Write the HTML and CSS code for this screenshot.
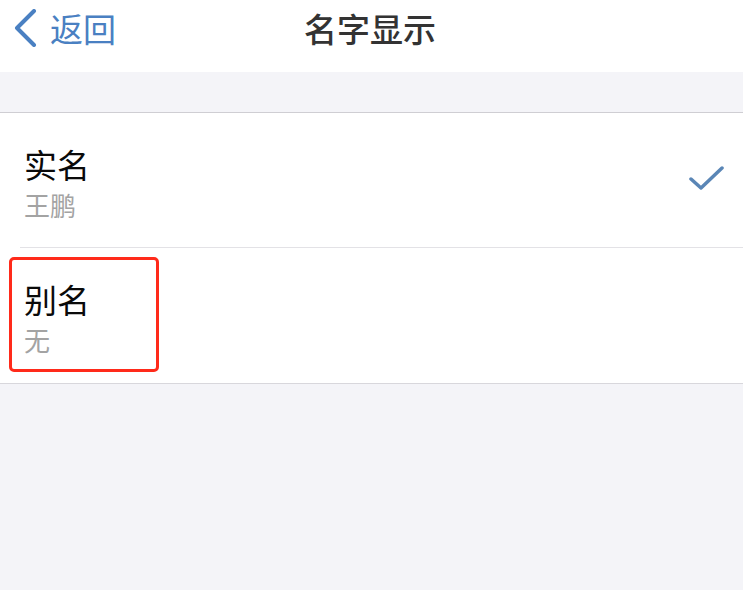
FILE: index.html
```html
<!DOCTYPE html>
<html lang="zh-CN">
<head>
<meta charset="utf-8">
<link rel="stylesheet" href="styles.css">
</head>
<body>
<div class="page">
  <header class="nav">
    <div class="back">
      <svg class="chev" width="26" height="38" viewBox="0 0 26 38"><path d="M22 2 L5 19 L22 36" fill="none" stroke="#4a80c2" stroke-width="4" stroke-linecap="round" stroke-linejoin="round"/></svg>
      <span class="back-text">返回</span>
    </div>
    <div class="title">名字显示</div>
  </header>
  <div class="gap"></div>
  <div class="list">
    <div class="row">
      <div class="texts">
        <div class="main">实名</div>
        <div class="sub">王鹏</div>
      </div>
      <svg class="check" width="38" height="36" viewBox="0 0 38 36"><path d="M2 16 L12 25 L33 5" fill="none" stroke="#5a86b6" stroke-width="3.5" stroke-linecap="round" stroke-linejoin="round"/></svg>
    </div>
    <div class="row last">
      <div class="texts">
        <div class="main">别名</div>
        <div class="sub">无</div>
      </div>
      <div class="highlight"></div>
    </div>
  </div>
  <div class="rest"></div>
</div>
</body>
</html>
```
FILE: styles.css
```css
html, body {
  margin: 0;
  padding: 0;
  background: #f4f4f8;
}
.page {
  width: 743px;
  height: 590px;
  font-family: "Noto Sans CJK SC", "Noto Sans", sans-serif;
  background: #f4f4f8;
  overflow: hidden;
}
.nav {
  height: 72px;
  background: #ffffff;
  position: relative;
  display: flex;
  align-items: center;
  justify-content: center;
}
.back {
  position: absolute;
  left: 12px;
  top: 8px;
  display: flex;
  align-items: center;
  gap: 12px;
}
.back-text {
  font-size: 33px;
  line-height: 40px;
  color: #4a80c2;
}
.title {
  font-size: 33px;
  line-height: 40px;
  color: #333333;
  font-weight: 500;
  margin-top: -16px;
  margin-left: -3px;
}
.gap {
  height: 40px;
}
.list {
  background: #ffffff;
  border-top: 1px solid #cfced3;
  border-bottom: 1px solid #d8d7dc;
}
.row {
  position: relative;
  height: 135px;
  display: flex;
  align-items: center;
  justify-content: space-between;
  padding-left: 24px;
  padding-right: 16px;
}
.row::after {
  content: "";
  position: absolute;
  left: 20px;
  right: 0;
  bottom: 0;
  height: 1px;
  background: #e3e2e6;
}
.row.last::after {
  display: none;
}
.texts {
  display: flex;
  flex-direction: column;
  margin-top: 4px;
}
.main {
  font-size: 33px;
  line-height: 40px;
  color: #0a0a0a;
}
.sub {
  font-size: 26px;
  line-height: 34px;
  color: #a3a3a3;
  margin-top: 4px;
}
.highlight {
  position: absolute;
  left: 9px;
  top: 9px;
  width: 144px;
  height: 109px;
  border: 3px solid #ff2a1a;
  border-radius: 5px;
}
```
